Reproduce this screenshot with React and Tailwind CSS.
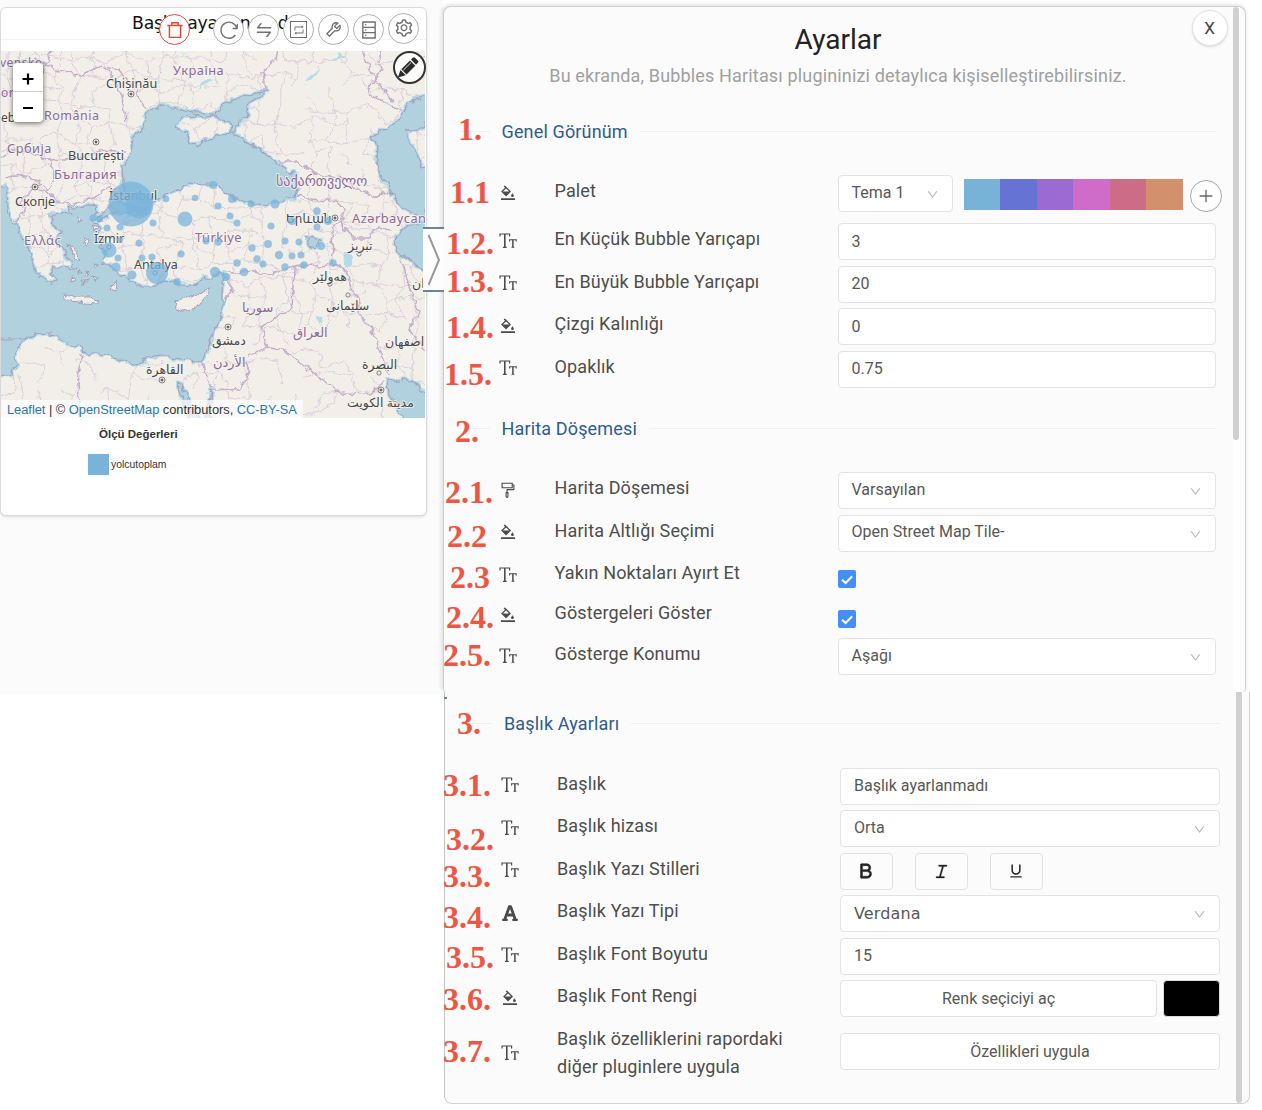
import React from "react";
import {
  AiOutlineBgColors, AiOutlineFormatPainter, AiOutlineDown, AiOutlineBold,
  AiOutlineItalic, AiOutlineUnderline, AiOutlineSwap, AiOutlineTool, AiOutlineDatabase,
  AiOutlineSetting, AiOutlineRetweet, AiOutlinePlus, AiOutlineDelete,
} from "react-icons/ai";
import { FaFont } from "react-icons/fa";

/* ---------- map ---------- */

const noise = (i, j, k) => {
  const v = Math.sin(i * 127.1 + j * 311.7 + k * 74.7) * 43758.5453;
  return v - Math.floor(v);
};
const node = (i, j) => [i * 17 - 8 + (noise(i, j, 1) - 0.5) * 14, 42 + j * 16 + (noise(i, j, 2) - 0.5) * 13];
let provinceLines = "";
for (let i = 0; i < 27; i++) {
  for (let j = 0; j < 25; j++) {
    const [x, y] = node(i, j);
    const sparse = y > 320 ? 0.4 : y < 180 && x > 250 ? 0.55 : 0.8;
    const [rx, ry] = node(i + 1, j);
    const [dx, dy] = node(i, j + 1);
    if (noise(i, j, 3) < sparse) provinceLines += `M${x.toFixed(1)} ${y.toFixed(1)}L${rx.toFixed(1)} ${ry.toFixed(1)}`;
    if (noise(i, j, 4) < sparse) provinceLines += `M${x.toFixed(1)} ${y.toFixed(1)}L${dx.toFixed(1)} ${dy.toFixed(1)}`;
  }
}

const seas = [
  "M123 195L123 183L122 167L130 157L132 145L133 137L143 128L145 115L154 109L162 105L177 108L193 112L197 117L182 118L175 128L187 133L190 143L197 147L210 138L222 135L233 133L253 145L273 160L293 173L298 183L295 197L273 203L252 204L240 200L230 195L217 185L203 185L190 183L178 189L167 195L153 202L133 201Z",
  "M215 113L222 105L235 99L247 95L267 91L260 97L248 103L246 109L249 115L240 121L235 127L235 133L231 133L230 122L220 120Z",
  "M193 111L206 113L216 116L206 117L196 115Z",
  "M427 96L416 99L407 105L403 114L400 120L384 130L370 137L378 146L377 160L382 176L390 190L396 200L403 208L414 214L427 217L427 170L422 167L418 154L410 142L405 130L413 131L427 127Z",
  "M427 222L412 224L403 229L397 237L394 244L397 253L408 258L416 266L427 273Z",
  "M-3 185L5 185L7 193L8 208L13 223L23 240L32 253L32 264L36 275L43 277L48 282L53 283L56 281L52 272L53 267L63 267L73 269L72 262L67 257L63 249L57 243L58 236L62 232L52 224L50 216L58 214L62 210L72 214L68 206L80 208L88 205L97 206L98 212L93 220L100 230L96 235L104 241L100 246L106 252L102 262L112 268L120 273L128 280L133 283L143 287L153 287L160 283L167 280L180 285L193 286L202 279L213 277L219 273L224 276L222 290L222 313L213 333L207 350L202 362L190 360L178 359L168 355L160 355L147 359L135 365L120 359L107 355L85 353L80 347L62 343L57 335L40 333L25 340L-3 340Z",
  "M-3 339L26 339L17 347L15 358L17 364L11 373L-3 377Z",
  "M112 204L120 201L134 206L149 208L146 212L130 214L118 212L106 216L98 222L97 219Z",
  "M388 379L396 382L404 378L416 384L427 398L427 421L405 421L394 405L389 394Z",
  "M177 382L181 384L188 399L201 421L192 421L183 400Z",
  "M210 389L212 390L209 421L206 421Z",
  "M308 237L322 240L316 248L308 245Z",
];
const lakes = [
  "M340 52L346 56L338 59L332 62L336 56Z",
  "M320 66L316 74L308 83L304 82L312 74Z",
  "M214 78L203 86L196 90L204 81Z",
  "M344 250L351 258L351 268L345 265Z",
  "M318 314L323 320L321 325L316 320Z",
  "M180 52L190 58L200 60L190 56Z",
];
const islands = [
  "M174 303L180 298L190 298L205 291L211 289L203 300L196 308L184 311L176 308Z",
  "M62 294L75 297L90 297L98 300L97 304L84 303L66 300Z",
  "M84 238L91 241L88 246L83 243Z",
  "M92 226L98 228L94 231Z",
  "M76 268L80 270L77 273Z",
  "M70 277L75 280L71 282Z",
  "M85 270L90 273L86 276Z",
  "M108 287L117 282L115 290Z",
  "M78 218L83 220L79 223Z",
  "M82 280L87 281L84 284Z",
  "M92 276L97 279L94 281Z",
  "M66 243L76 252L80 260L74 257Z",
  "M94 262L99 264L95 267Z",
];
const borders = [
  "M0 62L20 66L40 60L55 70L80 76L100 66L118 70L136 90L146 110",
  "M52 50L46 66L34 82L22 95L10 92L0 96",
  "M125 122L122 96L112 76L104 68",
  "M278 50L276 60L262 72L265 88L256 92",
  "M0 158L12 150L28 152L50 160L80 158L104 150L126 152",
  "M50 160L54 175L48 190L57 202L70 204L94 198L104 190L120 188",
  "M5 178L20 175L34 180L48 190",
  "M15 222L24 212L22 200L34 188L48 192",
  "M222 272L234 274L250 270L268 274L290 268L304 265L320 266L333 264",
  "M275 162L297 162L320 176L345 178L358 190L378 196L390 190",
  "M286 191L297 196L318 200L338 202L345 210L340 222L332 228L333 264L346 270L350 285L360 302L358 312L372 330L380 350L388 375",
  "M378 50L382 70L366 90L380 100L403 112",
  "M294 268L292 308L262 326L268 348L248 356",
  "M268 348L283 350L300 362L340 393L372 394L384 380",
  "M202 361L211 389L238 390L250 372L242 356",
  "M82 354L78 380L80 418",
  "M340 222L352 238L370 238L378 226L392 230",
  "M396 252L404 268L410 290L418 310L410 330L425 350",
  "M362 50L368 66L378 84L394 102",
  "M222 280L226 276L232 290L222 304L214 330",
];

const towns = [
  [131, 94, 1], [96, 142, 1], [35, 187, 1], [335, 218, 1], [228, 327, 1], [162, 380, 1], [381, 390, 1],
  [109, 247, 0], [155, 273, 0], [359, 254, 0], [348, 295, 0], [330, 284, 0], [379, 373, 0],
];

const mapLabels = [
  ["venske", 0, 67, 12, "c"], ["orszag", 1, 97, 12, "c"], ["România", 44, 120, 12.5, "c"], ["Україна", 173, 75, 12.8, "c"],
  ["Србија", 7, 153, 12.8, "c"], ["България", 54, 179, 12.8, "c"], ["Ελλάς", 24, 245, 13, "c"], ["Türkiye", 195, 242, 12.8, "c"],
  ["საქართველო", 276, 186, 14, "c"], ["Azərbaycan", 352, 223, 12.8, "c"], ["سوريا", 242, 312, 13, "c"], ["العراق", 293, 337, 13, "c"], ["الأردن", 213, 367, 13, "c"],
  ["eb", 1, 122, 12, "t"], ["Chișinău", 106, 88, 12.7, "t"], ["București", 68, 160, 12.7, "t"], ["Скопје", 15, 206, 12.7, "t"],
  ["İstanbul", 109, 200, 12.5, "t"], ["İzmir", 94, 243, 12.5, "t"], ["Antalya", 134, 269, 12.5, "t"], ["Երևան", 286, 223, 12, "t"],
  ["تبريز", 348, 250, 12.5, "t"], ["هەولێر", 313, 281, 12.5, "t"], ["سلێمانی", 326, 310, 12.5, "t"], ["دمشق", 212, 345, 12.5, "t"],
  ["القاهرة", 146, 374, 12.5, "t"], ["اصفهان", 385, 346, 12.5, "t"], ["البصرة", 362, 369, 12.5, "t"], ["مدينة الكويت", 347, 407, 12.5, "t"], ["ان", 412, 288, 12.5, "t"],
];

const bubbles = [
  [131, 204, 22.5], [139, 205, 13], [185, 219, 7.5], [109, 250, 7.5], [157, 273, 11], [166, 199, 3.3], [195, 198, 3.3], [213, 185, 4], [93, 218, 3.6],
  [100, 219, 3.3], [107, 228, 3.5], [120, 227, 3.5], [153, 223, 3.5], [139, 243, 3.5], [118, 258, 3.5], [116, 267, 4.5], [132, 275, 4.5], [142, 258, 3.5],
  [152, 257, 3.5], [181, 254, 3.6], [177, 282, 3.8], [206, 241, 3.5], [218, 206, 3.6], [232, 199, 4], [230, 216, 3.5], [237, 223, 3.5], [218, 242, 3.7],
  [251, 204, 3.5], [275, 204, 4.5], [271, 226, 3.5], [252, 248, 3.7], [268, 244, 4], [285, 241, 3.5], [299, 242, 3.5], [279, 255, 4.2], [292, 256, 3.5],
  [301, 255, 3.5], [321, 246, 4], [317, 211, 3.7], [317, 227, 3.5], [328, 221, 4], [292, 221, 4], [333, 263, 3.7], [304, 265, 3.7], [285, 267, 3.7],
  [257, 259, 3.7], [263, 264, 3.6], [237, 263, 3.7], [244, 272, 4.3], [226, 277, 4], [215, 272, 5.2], [120, 240, 3],
];

function BubbleMap() {
  return (
    <svg className="block h-[367px] w-[424px]" viewBox="1 51 424 367">
      <defs>
        <filter id="rough" x="-5%" y="-5%" width="110%" height="110%" colorInterpolationFilters="sRGB">
          <feTurbulence type="fractalNoise" baseFrequency="0.13" numOctaves="2" seed="4" />
          <feDisplacementMap in="SourceGraphic" scale="8" xChannelSelector="R" yChannelSelector="G" />
        </filter>
      </defs>
      <rect x="0" y="50" width="430" height="370" fill="#f2efe9" />
      <g filter="url(#rough)" strokeLinejoin="round" fill="none">
        <path d={provinceLines} stroke="#d9cbd8" strokeWidth="0.9" />
        {borders.map((d) => <path key={d} d={d} stroke="#c3aec8" strokeWidth="1.5" />)}
        {seas.map((d) => <path key={d} d={d} stroke="#b3dbe8" strokeWidth="4" />)}
        {seas.map((d) => <path key={"l" + d} d={d} fill="#b0d1dd" stroke="#a5a0bd" strokeWidth="1.2" />)}
        {lakes.map((d) => <path key={d} d={d} fill="#b3dbe8" />)}
        {islands.map((d) => <path key={d} d={d} fill="#f2efe9" stroke="#a5a0bd" strokeWidth="1.1" />)}
      </g>
      {towns.map(([x, y, capital]) => (
        <g key={x + "-" + y} fill="#f2efe9" stroke="#666" strokeWidth="0.8">
          <circle cx={x} cy={y} r={capital ? 3 : 2.1} />
          {capital ? <circle cx={x} cy={y} r="1.1" fill="#444" /> : null}
        </g>
      ))}
      <g fontFamily="'Noto Sans','DejaVu Sans',sans-serif" stroke="#f7f5f1" strokeWidth="2" strokeLinejoin="round" paintOrder="stroke" strokeOpacity="0.8">
        {mapLabels.map(([t, x, y, s, kind]) => (
          <text key={t} x={x} y={y} fontSize={s} fill={kind === "c" ? "#8a6a94" : "#484848"} letterSpacing={kind === "c" && /^[A-Za-zΑ-ωА-яİüâ]/.test(t) ? 0.5 : 0}>{t}</text>
        ))}
      </g>
      {bubbles.map(([x, y, r]) => <circle key={x + "-" + y} cx={x} cy={y} r={r} fill="#7ab3d9" fillOpacity="0.75" />)}
    </svg>
  );
}

/* ---------- map card ---------- */

function Round({ className = "border-[#b0b0b0] text-[#707070]", children }) {
  return (
    <span className={"flex size-[31px] items-center justify-center rounded-full border bg-white " + className}>
      {children}
    </span>
  );
}

function MapCard() {
  return (
    <section className="relative mt-[7px] h-[509px] w-[427px] overflow-hidden rounded-md border border-[#dadada] bg-white shadow">
      <header className="h-[43px]">
        <h2 className="whitespace-nowrap pl-[131px] pt-[3px] text-[17.3px] leading-[24px] tracking-[-0.2px] text-[#111] [font-family:'DejaVu_Sans',sans-serif]">Başlık ayarlanmadı</h2>
        <div className="mt-[4px] border-t border-[#f3f3f3]" />
        <div className="absolute right-[7px] top-[6px] flex items-center gap-[4px]">
          <Round className="mr-[19px] border-[#dc4b4b] text-[#e8432f]">
            <svg viewBox="0 0 20 20" className="size-[18px]" fill="none" stroke="currentColor" strokeWidth="1.6">
              <path d="M1.5 5H18.5M6.5 5V2H13.5V5M3.8 5V18.2H16.2V5" />
            </svg>
          </Round>
          <Round>
            <svg viewBox="0 0 20 20" className="size-5" fill="none" stroke="currentColor" strokeWidth="1.3">
              <path d="M17.7 8.2A8 8 0 1 0 16.4 15M18.2 3.8V8.5H13.6" />
            </svg>
          </Round>
          <Round><AiOutlineSwap size={20} /></Round>
          <Round><span className="flex size-[17px] items-center justify-center border-[1.5px] border-[#707070]"><AiOutlineRetweet size={12} /></span></Round>
          <Round><AiOutlineTool size={19} /></Round>
          <Round><AiOutlineDatabase size={20} /></Round>
          <Round className="-mt-[3px] border-[#b0b0b0] text-[#707070]"><AiOutlineSetting size={20} /></Round>
        </div>
      </header>
      <div className="relative">
        <BubbleMap />
        <div className="absolute left-[12px] top-[12px] flex h-[59px] w-[30px] flex-col rounded bg-white shadow-[0_1px_5px_rgba(0,0,0,0.6)]">
          <span className="flex h-[29px] items-center justify-center border-b border-[#ccc] pt-[3px]">
            <svg viewBox="0 0 12 12" className="size-3" stroke="#000" strokeWidth="2.2"><path d="M0.5 6H11.5M6 0.5V11.5" /></svg>
          </span>
          <span className="flex h-[30px] items-center justify-center pt-[2px]"><i className="h-[2.5px] w-[10px] bg-black" /></span>
        </div>
        <span className="absolute right-0 top-0 flex size-[33px] items-center justify-center rounded-full border-2 border-[#333] bg-white/80 text-[#2b2b2b]">
          <svg viewBox="0 0 24 24" className="-ml-[4px] size-[23px]" fill="currentColor">
            <path d="M2 22.5L4.6 14.6L10.2 20.2ZM5.5 13.7L14.6 4.7L20.1 10.2L11 19.3ZM15.6 3.7L17.8 1.6Q18.8 .8 19.8 1.7L23 4.9Q23.9 5.9 23 6.9L20.9 9.1Z" />
            <path d="M7.6 14.8L15.6 6.9" stroke="#fff" strokeWidth="0.9" />
          </svg>
        </span>
        <p className="absolute bottom-0 left-0 h-[18px] w-[302px] whitespace-nowrap bg-white/70 pl-[6px] text-[12.85px] leading-[20px] tracking-[-0.02px] text-[#333] [font-family:'Liberation_Sans',sans-serif]">
          <a className="text-[#2a78ab]">Leaflet</a> | © <a className="text-[#2a78ab]">OpenStreetMap</a> contributors, <a className="text-[#2a78ab]">CC-BY-SA</a>
        </p>
      </div>
      <div className="text-[#333] [font-family:'Liberation_Sans',sans-serif]">
        <p className="ml-[98px] mt-[8px] text-[11.5px] font-bold leading-[16px]">Ölçü Değerleri</p>
        <div className="ml-[87px] mt-[12px] flex items-center gap-[2px]">
          <span className="size-[21px] bg-[#7ab3d9]" />
          <span className="pt-px text-[10.4px]">yolcutoplam</span>
        </div>
      </div>
    </section>
  );
}

/* ---------- settings ---------- */

const TextSize = ({ className }) => (
  <svg viewBox="0 0 18 18" className={"size-[18px] " + className} fill="none" stroke="currentColor">
    <path d="M1 4.6V2H10.6V4.6M3.9 15.3H7.7" strokeWidth="1.2" />
    <path d="M5.8 2V15.3" strokeWidth="1.6" />
    <path d="M10.6 9.6V7.8H17.2V9.6M12.5 15.3H15.3" strokeWidth="1.1" />
    <path d="M13.9 7.8V15.3" strokeWidth="1.5" />
  </svg>
);

const icons = { size: TextSize, fill: AiOutlineBgColors, paint: AiOutlineFormatPainter, font: FaFont };
const box = "flex h-[37px] items-center rounded-[4px] border border-[#e3e3e3] bg-white px-[13px] text-[16px] text-[#575757]";

function Row({ icon, label, className = "h-[42.5px]", iconClass = "mt-[8.5px]", children }) {
  const Icon = icons[icon];
  return (
    <div className={"flex items-start " + className}>
      <span className={"flex w-[56px] shrink-0 " + iconClass}><Icon size={18} className="text-[#4b4b4b]" /></span>
      <span className="mt-[2px] w-[283px] shrink-0 whitespace-pre-line text-[18px] leading-[28px] tracking-[0.13px] text-[#4d4d4d]">{label}</span>
      <div className="flex-1">{children}</div>
    </div>
  );
}

const Field = ({ children }) => <div className={box}>{children}</div>;
const Select = ({ children, className = "" }) => (
  <div className={box + " " + className}>
    <span className="-mt-[2px] flex-1">{children}</span>
    <AiOutlineDown size={13} className="mt-[2px] text-[#b5b5b5]" />
  </div>
);
const Check = () => (
  <span className="mt-[13px] flex size-[18px] items-center justify-center rounded-[2px] bg-[#448ef7]">
    <svg viewBox="0 0 18 18" className="size-[18px]" fill="none" stroke="#fff" strokeWidth="2"><path d="M4 9.8L7.6 13L14.2 6.2" /></svg>
  </span>
);
const Divider = ({ children, className }) => (
  <div className={"-ml-[39px] flex h-[28px] items-center text-[18px] tracking-[0.15px] text-[#2d5b8e] " + className}>
    <i className="h-px w-[30px] bg-[#f0f0f0]" />
    <span className="mx-[12px]">{children}</span>
    <i className="h-px flex-1 bg-[#f0f0f0]" />
  </div>
);
const StyleButton = ({ children }) => (
  <span className="flex h-[37px] w-[52.5px] items-center justify-center rounded-[4px] border border-[#e1e1e1] bg-[#fcfcfc] text-[#222]">{children}</span>
);

const numbers = [
  ["1.", "left-[458px] top-[113px]"], ["1.1", "left-[450px] top-[176px]"], ["1.2.", "left-[446px] top-[227px]"], ["1.3.", "left-[446px] top-[265px]"],
  ["1.4.", "left-[446px] top-[311px]"], ["1.5.", "left-[444px] top-[358px]"], ["2.", "left-[455px] top-[415px]"], ["2.1.", "left-[445px] top-[476px]"],
  ["2.2", "left-[447px] top-[520px]"], ["2.3", "left-[450px] top-[561px]"], ["2.4.", "left-[446px] top-[601px]"], ["2.5.", "left-[443px] top-[639px]"],
  ["3.", "left-[457px] top-[707px]"], ["3.1.", "left-[443px] top-[769px]"], ["3.2.", "left-[446px] top-[823px]"], ["3.3.", "left-[443px] top-[860px]"],
  ["3.4.", "left-[443px] top-[901px]"], ["3.5.", "left-[446px] top-[941px]"], ["3.6.", "left-[443px] top-[983px]"], ["3.7.", "left-[443px] top-[1035px]"],
];

export default function App() {
  return (
    <div className="relative flex h-[1110px] w-[1262px] overflow-hidden bg-white [font-family:Roboto,sans-serif]">
      <aside className="relative h-[694px] w-[442.5px] shrink-0 bg-[#fbfbfb]">
        <MapCard />
        <span className="absolute left-[423px] top-[227px] z-10 flex h-[65px] w-[21px] items-center border-y-2 border-[#6f8194] bg-[#fdfdfd]">
          <svg viewBox="0 0 21 61" className="h-[61px] w-[21px]" fill="none" stroke="#999" strokeWidth="2"><path d="M5.5 6L16 31L5.5 56" /></svg>
        </span>
      </aside>

      <main className="w-[819px]">
        <section className="relative mt-[6px] h-[686px] w-[803px] rounded-lg rounded-b border border-b-0 border-[#cfcfcf] bg-[#fbfbfb] pl-[55px] pr-[29px] shadow-[-1px_-1px_4px_rgba(0,0,0,0.15)]">
          <h1 className="-ml-[55px] -mr-[17px] mt-[15px] h-[36px] text-center text-[28px] leading-[36px] text-[#222]">Ayarlar</h1>
          <p className="-ml-[55px] -mr-[17px] mt-[6px] whitespace-nowrap text-center text-[18px] leading-[24px] tracking-[0.155px] text-[#a0a0a0]">Bu ekranda, Bubbles Haritası plugininizi detaylıca kişiselleştirebilirsiniz.</p>
          <Divider className="mt-[29px] mb-[30px]">Genel Görünüm</Divider>
          <Row icon="fill" label="Palet" className="h-[48px]">
            <div className="-mr-[6px] flex items-start">
              <Select className="w-[115px]">Tema 1</Select>
              <div className="ml-[11px] mt-[4px] flex h-[31px]">
                <i className="w-[36.5px] bg-[#79b2d7]" /><i className="w-[36.5px] bg-[#6772d5]" /><i className="w-[36.5px] bg-[#9b6ad3]" />
                <i className="w-[36.5px] bg-[#cf6bc9]" /><i className="w-[36.5px] bg-[#cd6c87]" /><i className="w-[36.5px] bg-[#d2906c]" />
              </div>
              <span className="ml-[7px] mt-[5px] flex size-[32px] shrink-0 items-center justify-center rounded-full border border-[#a8a8a8] bg-white text-[#666]"><AiOutlinePlus size={18} /></span>
            </div>
          </Row>
          <Row icon="size" label="En Küçük Bubble Yarıçapı"><Field>3</Field></Row>
          <Row icon="size" label="En Büyük Bubble Yarıçapı"><Field>20</Field></Row>
          <Row icon="fill" label="Çizgi Kalınlığı"><Field>0</Field></Row>
          <Row icon="size" label="Opaklık"><Field>0.75</Field></Row>
          <Divider className="mt-[21px] mb-[30px]">Harita Döşemesi</Divider>
          <Row icon="paint" label="Harita Döşemesi"><Select>Varsayılan</Select></Row>
          <Row icon="fill" label="Harita Altlığı Seçimi"><Select>Open Street Map Tile-</Select></Row>
          <Row icon="size" label="Yakın Noktaları Ayırt Et" className="h-[40px]"><Check /></Row>
          <Row icon="fill" label="Göstergeleri Göster" className="h-[41px]"><Check /></Row>
          <Row icon="size" label="Gösterge Konumu"><Select>Aşağı</Select></Row>
          <div className="absolute right-[5px] top-0 h-[685px] w-[7px] bg-white"><div className="h-[433px] w-[6px] rounded-full bg-[#d0d0d0]" /></div>
          <button className="absolute right-[17px] top-[3px] flex size-[36px] items-center justify-center rounded-full border border-[#e2e2e2] bg-white pt-[2px] text-[17px] text-[#444] shadow-sm">X</button>
        </section>

        <section className="relative ml-[1.5px] h-[412px] w-[806px] rounded-b-lg border border-t-0 border-[#d2d2d2] border-l-[#c4c4c4] bg-[#fbfbfb] pl-[56px] pr-[29px] pt-[17px]">
          <Divider className="mb-[30.5px]">Başlık Ayarları</Divider>
          <Row icon="size" label="Başlık"><Field>Başlık ayarlanmadı</Field></Row>
          <Row icon="size" label="Başlık hizası"><Select>Orta</Select></Row>
          <Row icon="size" label="Başlık Yazı Stilleri">
            <div className="flex gap-[22.5px]">
              <StyleButton><AiOutlineBold size={20} stroke="currentColor" strokeWidth={30} /></StyleButton>
              <StyleButton><AiOutlineItalic size={19} stroke="currentColor" strokeWidth={15} /></StyleButton>
              <StyleButton><AiOutlineUnderline size={18} /></StyleButton>
            </div>
          </Row>
          <Row icon="font" label="Başlık Yazı Tipi"><Select><span className="relative top-px tracking-[0.15px] [font-family:'DejaVu_Sans',sans-serif]">Verdana</span></Select></Row>
          <Row icon="size" label="Başlık Font Boyutu"><Field>15</Field></Row>
          <Row icon="fill" label="Başlık Font Rengi">
            <div className="flex gap-[6px]">
              <div className={box + " flex-1 justify-center"}>Renk seçiciyi aç</div>
              <span className="h-[37px] w-[57px] rounded-[4px] border border-[#ddd] bg-black" />
            </div>
          </Row>
          <Row icon="size" label={"Başlık özelliklerini rapordaki\ndiğer pluginlere uygula"} className="h-[60px]" iconClass="mt-[21px]">
            <div className={box + " mt-[10.5px] justify-center"}>Özellikleri uygula</div>
          </Row>
          <div className="absolute right-[6px] top-0 h-[411px] w-[7px] bg-white"><div className="h-full w-[6px] rounded-b-full bg-[#d0d0d0]" /></div>
          <i className="absolute -left-px top-[5px] h-[2px] w-[3px] bg-[#6f8194]" />
        </section>
      </main>

      {numbers.map(([text, place]) => (
        <b key={text} className={"absolute whitespace-nowrap text-[32px] font-bold leading-[32px] text-[#ec5745] [font-family:'Liberation_Serif',serif] " + place}>{text}</b>
      ))}
    </div>
  );
}
